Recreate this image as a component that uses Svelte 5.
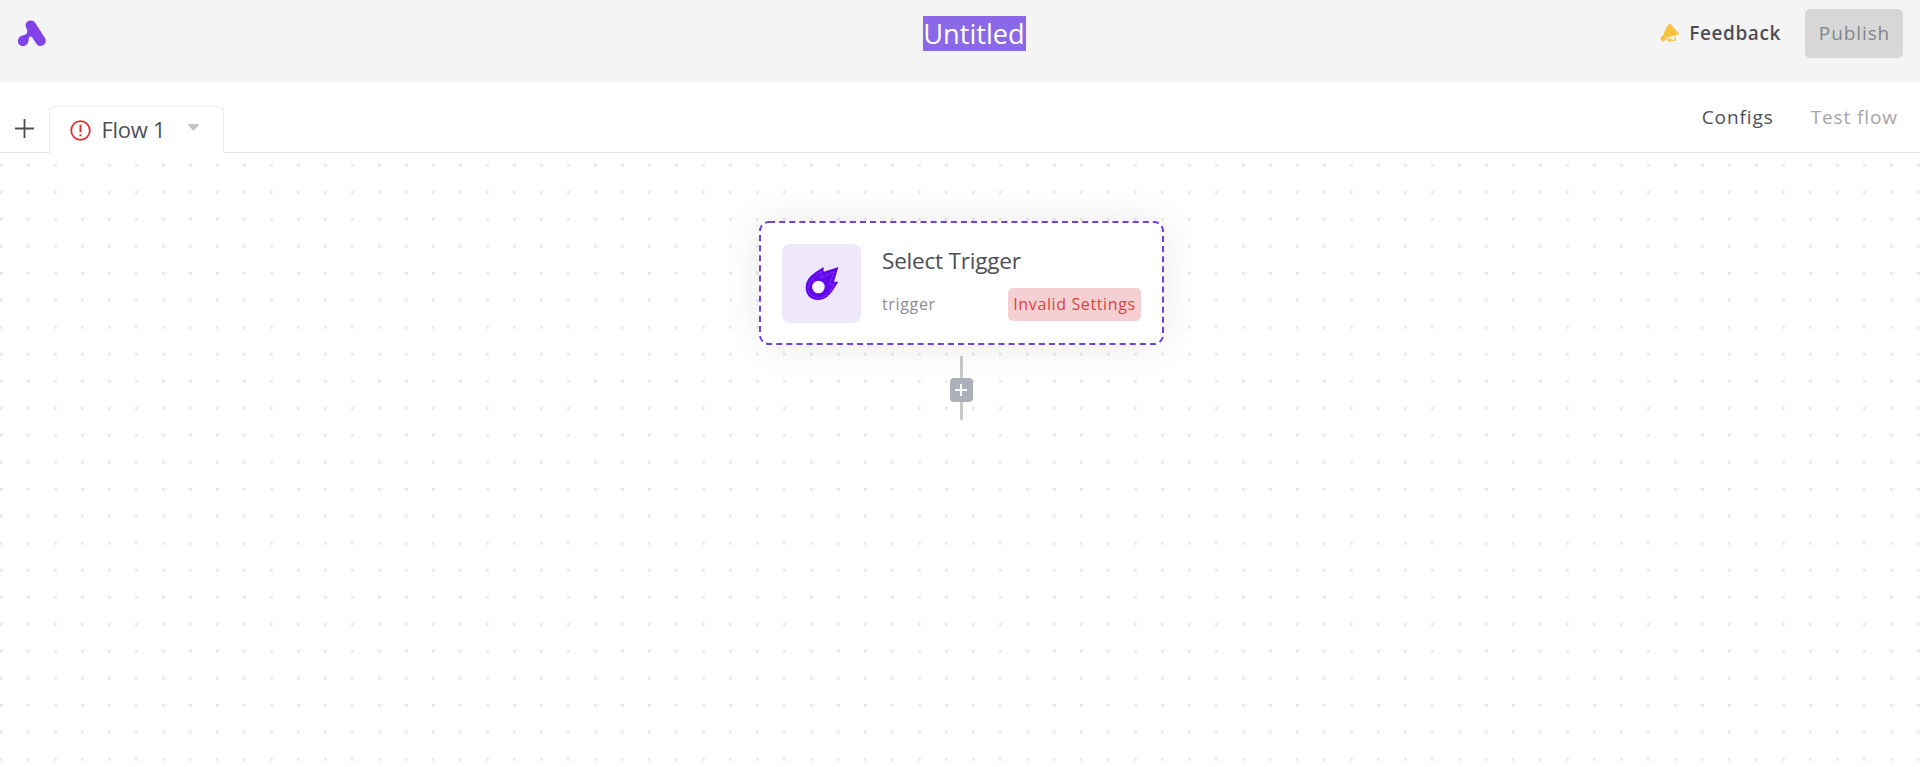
<script>
  const flowName = 'Flow 1';
  const step = { title: 'Select Trigger', kind: 'trigger', error: 'Invalid Settings' };
</script>

<div class="page">
  <header>
    <svg class="logo" width="30" height="28" viewBox="17 19 30 28">
      <path d="M25.6 25.6C25.6 19.9 33 19 35.3 23L45.1 38.3C48 43.3 41.2 49 36.7 44.2L32.4 37.7C31 35.7 29.3 36.3 28.8 38.2C28.6 39.8 28.7 41 27.9 42.7C25.5 48.1 17.9 46.6 17.9 41C17.9 37.8 20.3 35.8 22.9 35.4C26 34.8 27.6 33.2 27.2 30.2C26.9 28.6 25.6 27.6 25.6 25.6Z" fill="#8142e8" />
    </svg>
    <h1>Untitled</h1>
    <div class="actions">
      <button class="feedback">
        <svg width="20" height="20" viewBox="0 0 20 20">
          <path d="M8.7 1.3c.7-.7 1.4-.7 2 0l7.9 8.7c.6.8.2 1.6-.7 1.7L6 14.8 3.6 12C4.3 8.5 6.2 4.7 8.7 1.3Z" fill="#fbc03d" />
          <path d="M3.4 11.8 6.6 15.6 3.8 18.2c-.6.5-1.2.4-1.7-.2L.8 16.2c-.5-.7-.3-1.2.2-1.7Z" fill="#fbc03d" />
          <path d="m6.9 15.2 2.6 3 1.5-.7M9.7 15.2l1.6 2.1h2.8q1.6-.3 1.2-2.2l-.6-1.6" fill="none" stroke="#fbc03d" stroke-width="1.3" />
        </svg>
        <span>Feedback</span>
      </button>
      <button class="publish" disabled>Publish</button>
    </div>
  </header>

  <nav>
    <button class="add" aria-label="Add flow">
      <svg width="20" height="20" viewBox="0 0 20 20"><path d="M9.5 0v19M0 9.5h19" stroke="#4d4f56" stroke-width="1.8" /></svg>
    </button>
    <div class="tab">
      <svg width="21" height="21" viewBox="0 0 21 21">
        <circle cx="10.5" cy="10.5" r="9.3" fill="none" stroke="#dd3338" stroke-width="1.8" />
        <path d="M10.5 4.8v7.4M10.5 14.2v2" stroke="#dd3338" stroke-width="2" />
      </svg>
      <span class="name">{flowName}</span>
      <svg class="caret" width="11" height="7" viewBox="0 0 11 7"><path d="M.7 0h9.6q1 .5.4 1.2L6.2 6.3q-.7.7-1.4 0L.3 1.2Q-.3.5.7 0Z" fill="#c9c1c3" /></svg>
    </div>
    <div class="links"><span>Configs</span><span class="muted">Test flow</span></div>
  </nav>

  <main>
    <section class="card">
      <svg class="outline" width="405" height="124" viewBox="0 0 405 124">
        <rect x="1" y="1" width="403" height="122" rx="9" fill="none" stroke="#6e41e2" stroke-width="2" stroke-dasharray="6.1 4" />
      </svg>
      <div class="icon">
        <svg width="34" height="34" viewBox="0 0 34 34">
          <path fill="#6307ef" d="M18.6 0V4.8L33.4 0 29 14.8H33.2C29.8 21 26 26.6 22.2 29.8C16.5 34.2 7.8 34 3.6 29.3C-.8 23.8-.3 15.4 5 9.8C9 6 13.8 3 18.6 0Z" />
          <circle cx="13.4" cy="20" r="6.3" fill="#fbf8ff" />
          <path d="M16 4.4v6.4L29.2 4.6 24.4 17.4h4.8C25 25.4 20.7 30.8 13.2 30.8C4.2 30.6.6 22.2 5.2 15C8 11.1 12 7.4 16 4.4" fill="none" stroke="#8744ee" stroke-width=".9" stroke-dasharray="3 1" />
        </svg>
      </div>
      <div class="body">
        <h2>{step.title}</h2>
        <div class="meta"><span class="kind">{step.kind}</span><span class="badge">{step.error}</span></div>
      </div>
    </section>
    <div class="connector">
      <button aria-label="Add step">
        <svg width="12" height="12" viewBox="0 0 12 12"><path d="M6 0v12M0 6h12" stroke="#fff" stroke-width="2" /></svg>
      </button>
    </div>
  </main>
</div>

<style>
  .page { width: 1920px; height: 767px; overflow: hidden; display: flex; flex-direction: column; background: #fff; font-family: "Open Sans", sans-serif; color: #4d4f56; }
  .page * { box-sizing: border-box; }
  button { border: 0; padding: 0; background: none; font: inherit; color: inherit; display: flex; align-items: center; justify-content: center; }
  h1, h2 { margin: 0; font-weight: 400; }
  header { height: 82px; flex: none; background: #f4f4f4; display: grid; grid-template-columns: 1fr auto 1fr; align-items: start; padding: 0 17px; }
  .logo { margin-top: 19px; display: block; }
  h1 { margin-top: 16px; transform: translateX(14px); width: 103px; height: 35px; line-height: 36px; font-size: 27.2px; white-space: nowrap; text-align: center; color: #fff; background: #8a68e8; }
  .actions { display: flex; justify-content: flex-end; margin-top: 9px; gap: 24px; }
  .feedback { height: 49px; gap: 9px; font-size: 19px; font-weight: 600; letter-spacing: .6px; padding-bottom: 2px; }
  .publish { width: 98px; height: 49px; border-radius: 5px; background: #d7d7d7; color: #84868d; font-size: 19px; letter-spacing: .9px; padding: 0 0 2px 1px; }
  nav { height: 71px; flex: none; border-bottom: 1px solid #e6e6e6; display: flex; align-items: flex-end; }
  .add { width: 49px; height: 47px; }
  .tab { width: 175px; height: 47px; margin-bottom: -1px; border: 1px solid #ececec; border-bottom: 0; border-radius: 6px 6px 0 0; background: #fff; display: flex; align-items: center; padding-left: 19.5px; }
  .name { font-size: 22px; letter-spacing: -.3px; line-height: 30px; margin-left: 11px; width: 63px; margin-bottom: 2px; white-space: nowrap; }
  .caret { margin-left: 23px; margin-bottom: 5px; }
  .links { margin-left: auto; height: 70px; padding-right: 22px; display: flex; align-items: center; gap: 37px; font-size: 19px; letter-spacing: .9px; }
  .muted { color: #a5a6a9; }
  main { flex: 1; display: flex; flex-direction: column; align-items: center; padding: 68px 0 0 3px; background-image: radial-gradient(circle at 1.3px 12.2px, #ebebec 1.5px, transparent 2px); background-size: 27px 27px; }
  .card { position: relative; width: 405px; height: 124px; flex: none; border-radius: 10px; background: #fff; display: flex; padding: 23px; box-shadow: 0 0 40px rgba(0, 0, 0, .09); }
  .outline { position: absolute; inset: 0; }
  .icon { width: 79px; height: 79px; flex: none; border-radius: 8px; background: #efe8fb; display: flex; align-items: center; justify-content: center; }
  .body { flex: 1; margin-left: 21px; }
  h2 { font-size: 22.6px; letter-spacing: -.24px; line-height: 32px; margin-top: 1px; white-space: nowrap; }
  .meta { margin-top: 11px; display: flex; justify-content: space-between; align-items: center; }
  .kind { font-size: 16px; letter-spacing: .65px; color: #8c8d91; padding-bottom: 1px; }
  .badge { width: 133px; height: 33px; line-height: 32px; border-radius: 5px; background: #f5cfd2; color: #dc4146; font-size: 16px; letter-spacing: .62px; text-align: center; white-space: nowrap; }
  .connector { margin-top: 11px; width: 25px; height: 64px; flex: none; padding: 22px 0 0 .5px; background: linear-gradient(#cbc8ca, #cbc8ca) center / 3px 100% no-repeat; }
  .connector button { width: 23px; height: 24px; border-radius: 4px; background: #acb0b8; }
</style>
